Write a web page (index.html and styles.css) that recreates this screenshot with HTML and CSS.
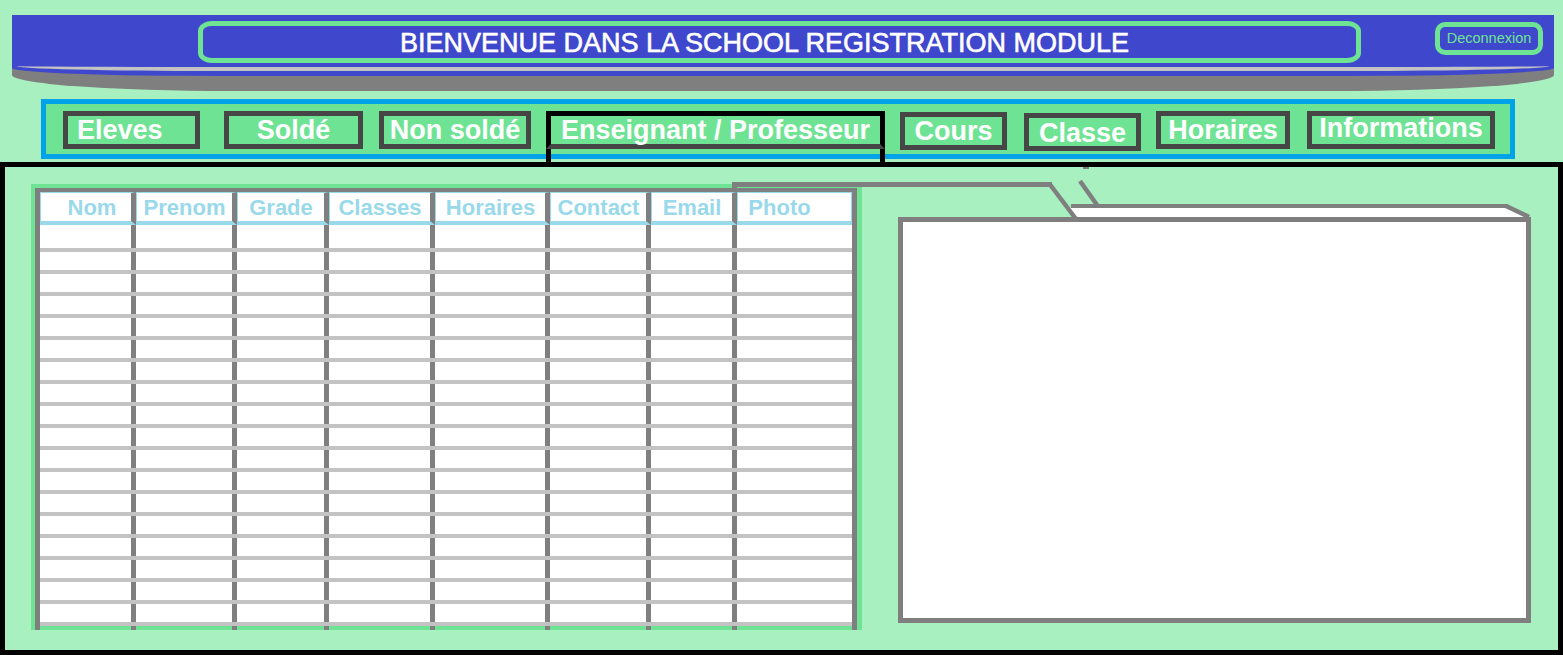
FILE: index.html
```html
<!DOCTYPE html>
<html lang="fr">
<head>
<meta charset="utf-8">
<title>School Registration Module</title>
<link rel="stylesheet" href="styles.css">
</head>
<body>
<header class="header">
  <div class="banner">
    <div class="banner-inner">
      <h1 class="title">BIENVENUE DANS LA SCHOOL REGISTRATION MODULE</h1>
      <a class="logout" href="#">Deconnexion</a>
    </div>
  </div>
</header>
<nav class="nav">
  <a class="tab tab-eleves" href="#">Eleves</a>
  <a class="tab tab-solde" href="#">Soldé</a>
  <a class="tab tab-nonsolde" href="#">Non soldé</a>
  <a class="tab tab-active" href="#">Enseignant / Professeur</a>
  <a class="tab tab-cours" href="#">Cours</a>
  <a class="tab tab-classe" href="#">Classe</a>
  <a class="tab tab-horaires" href="#">Horaires</a>
  <a class="tab tab-info" href="#">Informations</a>
</nav>
<main class="panel">
  <div class="table-frame">
    <table class="grid">
      <thead>
        <tr><th>Nom</th><th>Prenom</th><th>Grade</th><th>Classes</th><th>Horaires</th><th>Contact</th><th>Email</th><th>Photo</th></tr>
      </thead>
      <tbody>
        <tr class="row-first"><td></td><td></td><td></td><td></td><td></td><td></td><td></td><td></td></tr>
        <tr><td></td><td></td><td></td><td></td><td></td><td></td><td></td><td></td></tr>
        <tr><td></td><td></td><td></td><td></td><td></td><td></td><td></td><td></td></tr>
        <tr><td></td><td></td><td></td><td></td><td></td><td></td><td></td><td></td></tr>
        <tr><td></td><td></td><td></td><td></td><td></td><td></td><td></td><td></td></tr>
        <tr><td></td><td></td><td></td><td></td><td></td><td></td><td></td><td></td></tr>
        <tr><td></td><td></td><td></td><td></td><td></td><td></td><td></td><td></td></tr>
        <tr><td></td><td></td><td></td><td></td><td></td><td></td><td></td><td></td></tr>
        <tr><td></td><td></td><td></td><td></td><td></td><td></td><td></td><td></td></tr>
        <tr><td></td><td></td><td></td><td></td><td></td><td></td><td></td><td></td></tr>
        <tr><td></td><td></td><td></td><td></td><td></td><td></td><td></td><td></td></tr>
        <tr><td></td><td></td><td></td><td></td><td></td><td></td><td></td><td></td></tr>
        <tr><td></td><td></td><td></td><td></td><td></td><td></td><td></td><td></td></tr>
        <tr><td></td><td></td><td></td><td></td><td></td><td></td><td></td><td></td></tr>
        <tr><td></td><td></td><td></td><td></td><td></td><td></td><td></td><td></td></tr>
        <tr><td></td><td></td><td></td><td></td><td></td><td></td><td></td><td></td></tr>
        <tr><td></td><td></td><td></td><td></td><td></td><td></td><td></td><td></td></tr>
        <tr><td></td><td></td><td></td><td></td><td></td><td></td><td></td><td></td></tr>
        <tr class="row-stub"><td></td><td></td><td></td><td></td><td></td><td></td><td></td><td></td></tr>
      </tbody>
    </table>
  </div>
  <div class="folder"></div>
  <svg class="folder-tab" viewBox="0 162 1563 70" width="1563" height="70" aria-hidden="true">
    <g fill="#7f7f7f">
      <rect x="1083" y="167" width="6" height="2"/>
      <rect x="732" y="182" width="5" height="8"/>
      <rect x="732" y="182" width="320" height="5"/>
      <rect x="1071" y="204" width="437" height="4"/>
    </g>
    <polygon points="1068,208 1507,208 1527,217 1075,217" fill="#ffffff"/>
    <g stroke="#7f7f7f" stroke-width="4.5" fill="none">
      <line x1="1050" y1="184.5" x2="1076" y2="219"/>
      <line x1="1080" y1="181" x2="1097" y2="205"/>
      <line x1="1506" y1="206" x2="1529" y2="217"/>
    </g>
  </svg>
</main>
</body>
</html>
```
FILE: styles.css
```css
* { box-sizing: border-box; }
html, body { margin: 0; }
body {
  background: #a8f0bf;
  font-family: "Liberation Sans", Arial, sans-serif;
  width: 1563px;
  height: 655px;
  overflow: hidden;
}

/* ---------- header ---------- */
.header {
  margin: 15px 9px 0 12px;
  background: #7f7f7f;
  border-radius: 0 0 220px 220px / 0 0 16px 16px;
  padding-bottom: 15px;
}
.banner {
  background: #3f48cc;
  height: 61px;
  padding: 0 5px 5px;
  border-radius: 0 0 210px 210px / 0 0 8px 8px;
}
.banner-inner {
  height: 56px;
  border-bottom: 4px solid #c3c3c3;
  border-radius: 0 0 200px 200px / 0 0 5px 5px;
  display: flex;
  align-items: flex-start;
}
.title {
  margin: 6px 0 0 181px;
  width: 1163px;
  height: 42px;
  border: 5px solid #6ee394;
  border-radius: 14px / 10px;
  color: #ffffff;
  font-size: 27px;
  font-weight: 400;
  line-height: 29px;
  padding: 3px 30px 0 0;
  text-align: center;
  white-space: nowrap;
  -webkit-text-stroke: 0.6px #ffffff;
}
.logout {
  margin: 7px 6px 0 auto;
  width: 108px;
  height: 33px;
  border: 5px solid #6ee394;
  border-radius: 10px;
  color: #6ee394;
  font-size: 14.5px;
  line-height: 23px;
  text-align: center;
  text-decoration: none;
}

/* ---------- nav ---------- */
.nav {
  margin: 8px 0 0 41px;
  width: 1474px;
  height: 60px;
  border: 5px solid #00a2e8;
  background: #6ee394;
  display: flex;
  align-items: flex-start;
  padding: 7px 0 0 17px;
}
.tab {
  flex: none;
  height: 38px;
  border: 5px solid #464646;
  color: #ffffff;
  font-size: 27px;
  font-weight: 700;
  line-height: 28px;
  text-align: center;
  white-space: nowrap;
  text-decoration: none;
}
.tab-eleves { width: 137px; text-align: left; padding-left: 9px; }
.tab-solde { width: 139px; margin-left: 24px; }
.tab-nonsolde { width: 152px; margin-left: 16px; }
.tab-active {
  position: relative;
  width: 339px;
  margin-left: 15px;
  border-color: #000000 #000000 #464646 #000000;
}
.tab-active::after {
  content: "";
  position: absolute;
  left: -5px;
  right: -5px;
  top: calc(100% + 5px);
  height: 13px;
  border-left: 5px solid #000000;
  border-right: 5px solid #000000;
}
.tab-cours { width: 107px; margin-left: 15px; margin-top: 1px; }
.tab-classe { width: 117px; margin-left: 17px; margin-top: 2px; line-height: 30px; }
.tab-horaires { width: 134px; margin-left: 15px; }
.tab-info { width: 188px; margin-left: 17px; line-height: 25px; }

/* ---------- main panel ---------- */
.panel {
  position: relative;
  margin-top: 3px;
  height: 493px;
  border: 5px solid #000000;
  display: flex;
  align-items: flex-start;
  padding: 17px 0 0 26px;
}
.table-frame {
  flex: none;
  width: 831px;
  height: 446px;
  background: #6ee394;
  padding: 4px 5px 0 4px;
}
.grid {
  table-layout: fixed;
  width: 822px;
  border-collapse: separate;
  border-spacing: 0;
  border-style: solid;
  border-color: #7f7f7f;
  border-width: 4px 5px 0 5px;
  background: #ffffff;
}
.grid th {
  padding: 2px 0 0;
  height: 33px;
  border-top: 1px solid #99d9ea;
  border-left: 1px solid #99d9ea;
  border-right: 5px solid #7f7f7f;
  border-bottom: 4px solid #99d9ea;
  color: #99d9ea;
  font-size: 22px;
  font-weight: 700;
  line-height: 26px;
  text-align: center;
  white-space: nowrap;
  overflow: hidden;
}
.grid th:nth-child(1) { width: 96px; padding-left: 12px; }
.grid th:nth-child(2) { width: 101px; }
.grid th:nth-child(3) { width: 92px; }
.grid th:nth-child(4) { width: 106px; }
.grid th:nth-child(5) { width: 115px; }
.grid th:nth-child(6) { width: 101px; }
.grid th:nth-child(7) { width: 86px; }
.grid th:nth-child(8) { width: 115px; border-right: 1px solid #99d9ea; padding-right: 30px; }

.grid td {
  padding: 0;
  height: 22px;
  border-bottom: 4px solid #c3c3c3;
  box-shadow: inset -5px 0 0 #7f7f7f;
}
.grid td:last-child { box-shadow: none; }
.grid .row-first td { height: 27px; }
.grid .row-stub td {
  height: 4px;
  border-bottom: 0;
  background: #6ee394;
}

.folder {
  flex: none;
  width: 633px;
  height: 406px;
  margin: 33px 0 0 36px;
  border: 5px solid #7f7f7f;
  background: #ffffff;
}
.folder-tab {
  position: absolute;
  left: -5px;
  top: -5px;
  pointer-events: none;
}
```
